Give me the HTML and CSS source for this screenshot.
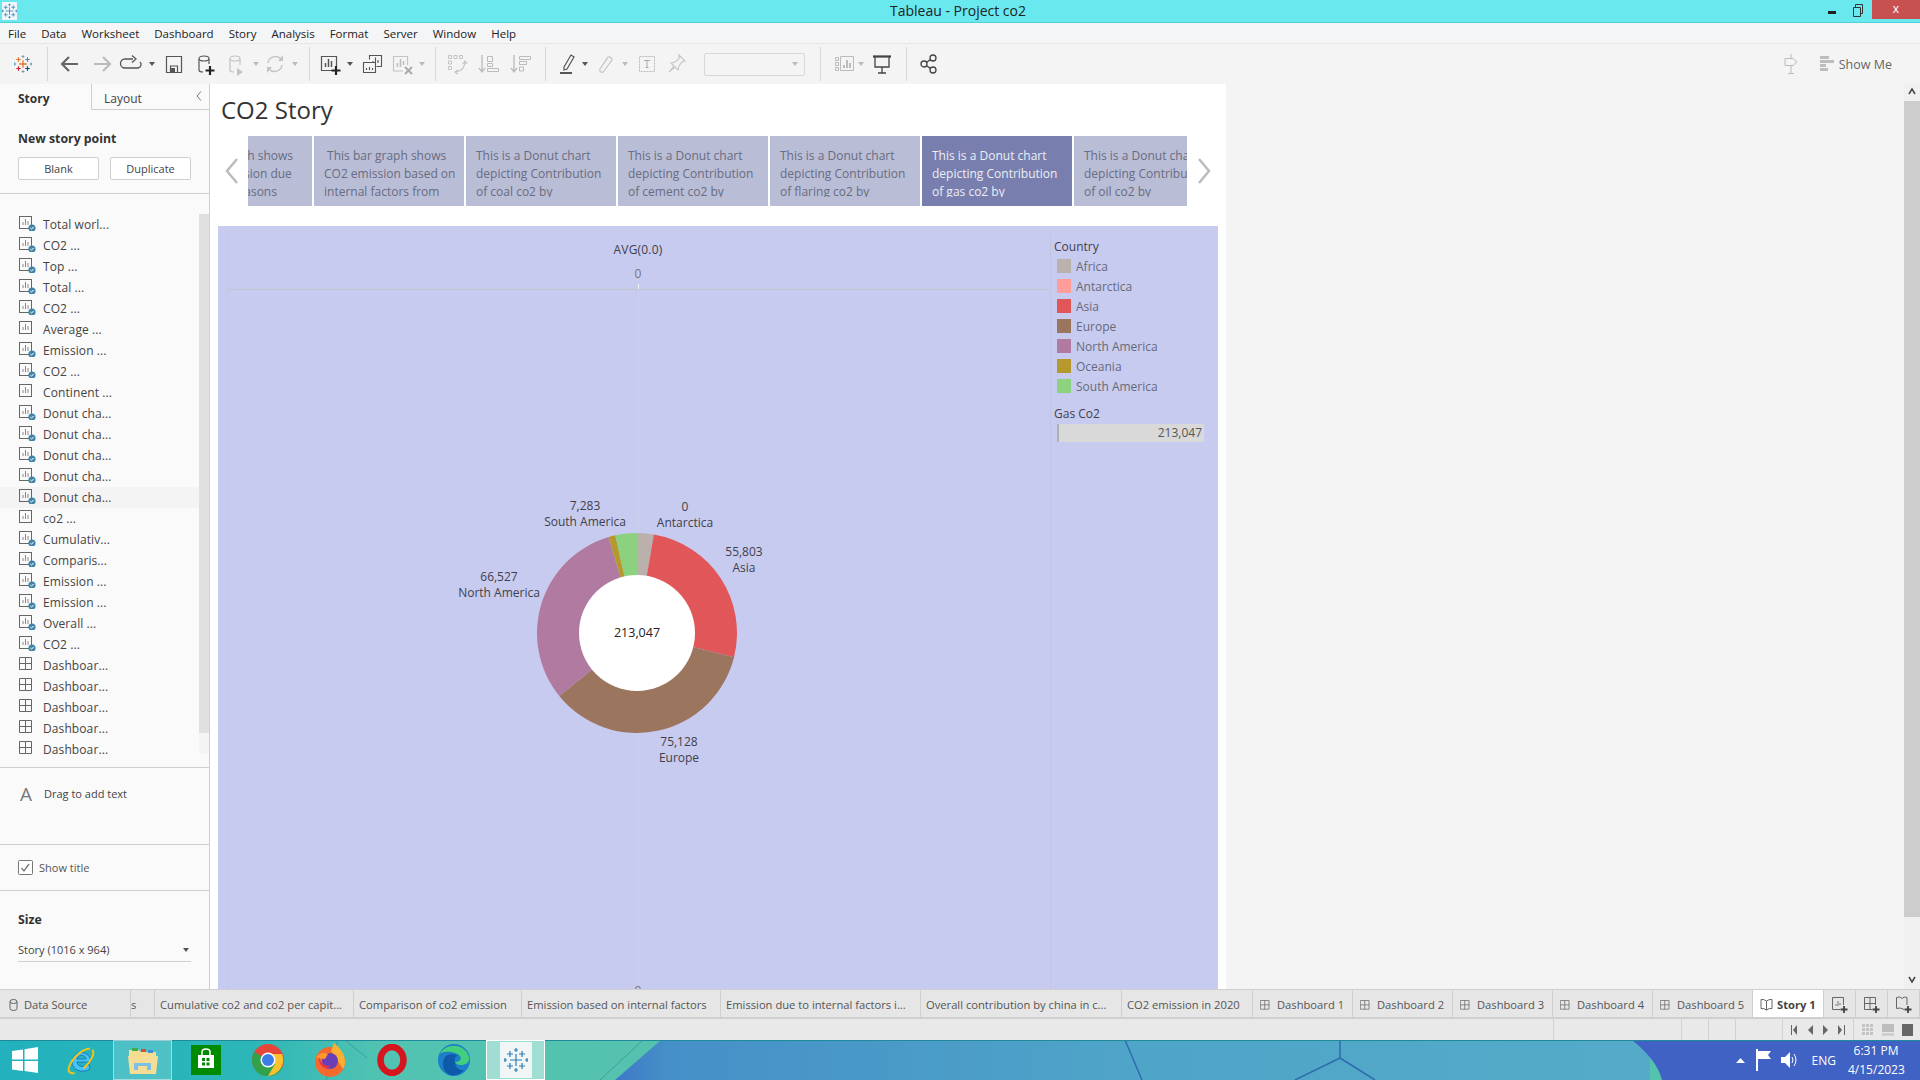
FILE: index.html
```html
<!DOCTYPE html>
<html lang="en">
<head>
    <meta charset="UTF-8">
    <title>Tableau - Project co2</title>
    <link rel="stylesheet" href="styles.css">
</head>
<body>
    <!-- shared icons -->
    <svg class="defs">
        <symbol id="ws" viewBox="0 0 18 18">
            <rect x="0.5" y="3.5" width="12" height="12" fill="none" stroke="#666"/>
            <path d="M4 12V9M6.5 12V6M9 12V8" stroke="#888" fill="none"/>
        </symbol>
        <symbol id="ws-ok" viewBox="0 0 18 18">
            <rect x="0.5" y="3.5" width="12" height="12" fill="none" stroke="#666"/>
            <path d="M4 12V9M6.5 12V6M9 12V8" stroke="#888" fill="none"/>
            <circle cx="13" cy="15" r="3.6" fill="#3f84a8"/>
            <path d="M11.3 15l1.2 1.2 2.2-2.3" stroke="#fff" fill="none"/>
        </symbol>
        <symbol id="db" viewBox="0 0 18 18">
            <path d="M0.5 3.5h12v12h-12zM6.5 3.5v12M0.5 9.5h12" fill="none" stroke="#666"/>
        </symbol>
        <symbol id="logo" viewBox="-4 -4 32 32">
            <path d="M12 7v10M7 12h10" stroke="#e8762d" stroke-width="1.8"/>
            <path d="M6 3v6M3 6h6" stroke="#e8762d" stroke-width="1.6"/>
            <path d="M18 3v6M15 6h6" stroke="#5b879b" stroke-width="1.6"/>
            <path d="M6 15v6M3 18h6" stroke="#c72037" stroke-width="1.6"/>
            <path d="M18 15v6M15 18h6" stroke="#1f447a" stroke-width="1.6"/>
            <path d="M1 10v4M0 12h3M23 10v4M21 12h3" stroke="#5b9bc4" stroke-width="1.3"/>
            <path d="M12 0v4M10 2h4M12 20v4M10 22h4" stroke="#7d9cb0" stroke-width="1.3"/>
        </symbol>
        <symbol id="logo-blue" viewBox="0 0 24 24">
            <path d="M12 6v12M6 12h12M6 3v6M3 6h6M18 3v6M15 6h6M6 15v6M3 18h6M18 15v6M15 18h6M1 10v4M0 12h3M23 10v4M21 12h3M12 0v4M10 2h4M12 20v4M10 22h4" stroke="#2f7fb5" stroke-width="1.2" fill="none"/>
        </symbol>
    </svg>

    <header class="titlebar">
        <svg class="title-logo" width="15" height="18"><use href="#logo-blue"/></svg>
        <div class="title-text">Tableau - Project co2</div>
        <div class="win-btns">
            <span class="win-min"></span>
            <svg class="win-restore" width="10" height="13" viewBox="0 0 10 13"><path d="M2.5 3.5V.5h7v9h-2M.5 3.5h7v9h-7z" fill="none" stroke="#333"/></svg>
            <span class="win-close">x</span>
        </div>
    </header>

    <nav class="menubar">
        <span>File</span><span>Data</span><span>Worksheet</span><span>Dashboard</span><span>Story</span><span>Analysis</span><span>Format</span><span>Server</span><span>Window</span><span>Help</span>
    </nav>

    <div class="toolbar">
        <svg class="ti" viewBox="0 0 24 24"><use href="#logo" width="24" height="24"/></svg>
        <i class="sep g12"></i>
        <svg class="ti g10" viewBox="0 0 24 24"><path d="M20 12H5M11 5l-7 7 7 7" fill="none" stroke="#666" stroke-width="2.2"/></svg>
        <svg class="ti g8" viewBox="0 0 24 24"><path d="M4 12h15M13 5l7 7-7 7" fill="none" stroke="#bbb" stroke-width="2.2"/></svg>
        <svg class="ti g5" viewBox="0 0 24 24"><path d="M14 7H6a3.500 3.500 0 0 0 0 9h13a3.500 3.500 0 0 0 2-6M13 3.500l4 3.500-4 3.500" fill="none" stroke="#555" stroke-width="1.300"/></svg>
        <i class="caret g5"></i>
        <svg class="ti g6" viewBox="0 0 24 24"><path d="M4.500 4.500h15v16h-15zM8.500 20v-6h7v6" fill="none" stroke="#555" stroke-width="1.200"/><rect x="9" y="16" width="4" height="4" fill="#555"/></svg>
        <svg class="ti g6" viewBox="0 0 24 24"><path d="M7 7v11q0 2 4 2M17 7v5" fill="none" stroke="#555" stroke-width="1.200"/><ellipse cx="12" cy="6.500" rx="5" ry="2.500" fill="none" stroke="#555" stroke-width="1.200"/><path d="M18 14v9M13.500 18.500h9" stroke="#222" stroke-width="2.200"/></svg>
        <svg class="ti g7" viewBox="0 0 24 24"><path d="M7 7v11q0 2 4 2M17 7v6" fill="none" stroke="#c4c4c4" stroke-width="1.200"/><ellipse cx="12" cy="6.500" rx="5" ry="2.500" fill="none" stroke="#c4c4c4" stroke-width="1.200"/><path d="M14 16l6 4-6 4z" fill="#c4c4c4"/></svg>
        <i class="caret off g5"></i>
        <svg class="ti g3" viewBox="0 0 24 24"><path d="M5 11a7.500 7.500 0 0 1 13-4M19 13a7.500 7.500 0 0 1-13 4" fill="none" stroke="#c4c4c4" stroke-width="1.500"/><path d="M20 3v6h-5zM4 21v-6h5z" fill="#c4c4c4"/></svg>
        <i class="caret off g4"></i>
        <i class="sep g10"></i>
        <svg class="ti g8" viewBox="0 0 24 24"><path d="M16 18.500H3.500v-14h15V14" fill="none" stroke="#555" stroke-width="1.200"/><path d="M7.500 15v-4M10.500 15V7M13.500 15V9" stroke="#555" stroke-width="1.500"/><path d="M18 14v9M13.500 18.500h9" stroke="#222" stroke-width="2.200"/></svg>
        <i class="caret g4"></i>
        <svg class="ti g6" viewBox="0 0 24 24"><path d="M9.500 7.500v-4h12v11h-5M3.500 10.500h12v10h-12z" fill="none" stroke="#555" stroke-width="1.100"/><path d="M13 10V9M15.500 10V5.500M18 11V8M6.500 18v-2M9.500 18v-3M12.500 18v-2" stroke="#555" stroke-width="1.100"/></svg>
        <svg class="ti g6" viewBox="0 0 24 24"><path d="M13 19H3.500V4.500h14V13" fill="none" stroke="#c4c4c4" stroke-width="1.200"/><path d="M7.500 15v-4M10.500 15V7M13.500 13V9" stroke="#bbb" stroke-width="1.500"/><path d="M15 15l7 7M22 15l-7 7" stroke="#aaa" stroke-width="2"/></svg>
        <i class="caret off g4"></i>
        <i class="sep g9"></i>
        <svg class="ti g9" viewBox="0 0 24 24"><path d="M3.500 3.500h3v3h-3zM9 3.500h3v3H9zM14.500 3.500h3v3h-3zM3.500 9h3v3h-3zM3.500 14.500h3v3h-3z" fill="none" stroke="#c4c4c4"/><path d="M20 9q0 9-9 11M18 12l2-3 2 3M13 18l-3 2 3 2" fill="none" stroke="#c4c4c4" stroke-width="1.200"/></svg>
        <svg class="ti g9" viewBox="0 0 24 24"><path d="M4 3v16M1 16l3 4 3-4" fill="none" stroke="#bbb" stroke-width="1.300"/><path d="M9.500 4.500h5v5h-5zM9.500 11.500h5v3h-5zM9.500 16.500h11v3h-11z" fill="none" stroke="#bbb"/></svg>
        <svg class="ti g8" viewBox="0 0 24 24"><path d="M4 3v16M1 16l3 4 3-4" fill="none" stroke="#bbb" stroke-width="1.300"/><path d="M9.500 4.500h11v3h-11zM9.500 9.500h7v3h-7zM9.500 15h4v4h-4z" fill="none" stroke="#bbb"/></svg>
        <i class="sep g11"></i>
        <svg class="ti g9" viewBox="0 0 24 24"><path d="M9 15l7-12 3 2-7 12-3 1z" fill="none" stroke="#555" stroke-width="1.200"/><rect x="5" y="20" width="12" height="2" fill="#555"/></svg>
        <i class="caret g2"></i>
        <svg class="ti g4" viewBox="0 0 24 24"><path d="M9 14l6-9a3 3 0 0 1 4 3l-8 11a2 2 0 0 1-4-2l7-10" fill="none" stroke="#c4c4c4" stroke-width="1.200"/></svg>
        <i class="caret off g4"></i>
        <svg class="ti g6" viewBox="0 0 24 24"><rect x="4.500" y="4.500" width="15" height="15" fill="none" stroke="#bbb" stroke-dasharray="2 1"/><path d="M9 8.500h6M12 8.500v7M10.500 15.500h3" fill="none" stroke="#aaa"/></svg>
        <svg class="ti g6" viewBox="0 0 24 24"><path d="M14 3l6 6-3 1-3 4-1 4-3-3-6 5 5-6-3-3 4-1 4-3z" fill="none" stroke="#c4c4c4" stroke-width="1.100"/></svg>
        <div class="combo g15"><i class="caret off"></i></div>
        <i class="sep g15"></i>
        <svg class="ti g12" viewBox="0 0 24 24"><path d="M2.500 5.500h3v3h-3zM2.500 10.500h3v3h-3zM2.500 15.500h3v3h-3zM7.500 4.500h13v14h-13z" fill="none" stroke="#bbb"/><path d="M11 16v-3M14 16V8M17 16v-5" stroke="#aaa" stroke-width="1.500"/></svg>
        <i class="caret off"></i>
        <svg class="ti g5" viewBox="0 0 24 24"><path d="M3 4.500h18M5 5v10h14V5M12 15v6M8 21h8" fill="none" stroke="#444" stroke-width="1.300"/><path d="M3 4.500h18" stroke="#444" stroke-width="2"/></svg>
        <i class="sep g12"></i>
        <svg class="ti g10" viewBox="0 0 24 24"><circle cx="7" cy="12" r="3" fill="none" stroke="#444" stroke-width="1.300"/><circle cx="16" cy="6" r="3" fill="none" stroke="#444" stroke-width="1.300"/><circle cx="16" cy="18" r="3" fill="none" stroke="#444" stroke-width="1.300"/><path d="M9.500 10.300l4-2.700M9.500 13.700l4 2.700" stroke="#444" stroke-width="1.300"/></svg>
        <div class="toolbar-right">
            <svg width="14" height="20" viewBox="0 0 14 20"><path d="M7 0v4M1 4.500h8l4 3.500-4 3.500H1zM7 12v7M4 19.500h6" fill="none" stroke="#bbb"/></svg>
            <svg class="showme-icon" width="14" height="16" viewBox="0 0 14 16"><path d="M0 0h9v3H0zM0 4h14v3H0zM0 8h6v3H0zM0 12h8v3H0z" fill="#bdbdbd"/></svg>
            <span>Show Me</span>
        </div>
    </div>

    <div class="workspace">
        <aside class="sidebar">
            <div class="side-tabs">
                <div class="side-tab active">Story</div>
                <div class="side-tab">Layout<svg class="collapse" width="6" height="10" viewBox="0 0 6 10"><path d="M5 .5L1 5l4 4.500" fill="none" stroke="#777"/></svg></div>
            </div>
            <div class="new-point">
                <h3>New story point</h3>
                <div class="new-btns">
                    <button>Blank</button>
                    <button>Duplicate</button>
                </div>
            </div>
            <div class="sheets">
                <ul class="sheet-list">
                    <li><svg><use href="#ws-ok"/></svg>Total worl...</li>
                    <li><svg><use href="#ws-ok"/></svg>CO2 ...</li>
                    <li><svg><use href="#ws-ok"/></svg>Top ...</li>
                    <li><svg><use href="#ws-ok"/></svg>Total ...</li>
                    <li><svg><use href="#ws-ok"/></svg>CO2 ...</li>
                    <li><svg><use href="#ws"/></svg>Average ...</li>
                    <li><svg><use href="#ws-ok"/></svg>Emission ...</li>
                    <li><svg><use href="#ws-ok"/></svg>CO2 ...</li>
                    <li><svg><use href="#ws"/></svg>Continent ...</li>
                    <li><svg><use href="#ws-ok"/></svg>Donut cha...</li>
                    <li><svg><use href="#ws-ok"/></svg>Donut cha...</li>
                    <li><svg><use href="#ws-ok"/></svg>Donut cha...</li>
                    <li><svg><use href="#ws-ok"/></svg>Donut cha...</li>
                    <li class="hover"><svg><use href="#ws-ok"/></svg>Donut cha...</li>
                    <li><svg><use href="#ws"/></svg>co2 ...</li>
                    <li><svg><use href="#ws-ok"/></svg>Cumulativ...</li>
                    <li><svg><use href="#ws-ok"/></svg>Comparis...</li>
                    <li><svg><use href="#ws-ok"/></svg>Emission ...</li>
                    <li><svg><use href="#ws-ok"/></svg>Emission ...</li>
                    <li><svg><use href="#ws-ok"/></svg>Overall ...</li>
                    <li><svg><use href="#ws-ok"/></svg>CO2 ...</li>
                    <li><svg><use href="#db"/></svg>Dashboar...</li>
                    <li><svg><use href="#db"/></svg>Dashboar...</li>
                    <li><svg><use href="#db"/></svg>Dashboar...</li>
                    <li><svg><use href="#db"/></svg>Dashboar...</li>
                    <li><svg><use href="#db"/></svg>Dashboar...</li>
                </ul>
                <div class="sheet-scroll"><div class="sheet-thumb"></div></div>
            </div>
            <div class="drag-text">
                <span class="big-a">A</span>
                <span>Drag to add text</span>
            </div>
            <div class="show-title">
                <svg width="15" height="15" viewBox="0 0 15 15"><rect x=".5" y=".5" width="14" height="14" rx="1" fill="#fff" stroke="#777"/><path d="M3.500 8l2.500 3 5-7" fill="none" stroke="#777" stroke-width="1.300"/></svg>
                <span>Show title</span>
            </div>
            <div class="size-box">
                <h3>Size</h3>
                <div class="size-select">Story (1016 x 964)<i class="caret"></i></div>
            </div>
        </aside>

        <main class="story">
            <h1 class="story-title">CO2 Story</h1>
            <div class="navigator">
                <svg class="flip" width="14" height="26" viewBox="0 0 14 26"><path d="M12 1L2 13l10 12" fill="none" stroke="#bcbcbc" stroke-width="2.500"/></svg>
                <div class="points">
                    <div class="point"><p>This bar graph shows<br>Its CO2 emission due<br>to various reasons</p></div>
                    <div class="point"><p>&nbsp;This bar graph shows<br>CO2 emission based on<br>internal factors from</p></div>
                    <div class="point"><p>This is a Donut chart<br>depicting Contribution<br>of coal co2 by</p></div>
                    <div class="point"><p>This is a Donut chart<br>depicting Contribution<br>of cement co2 by</p></div>
                    <div class="point"><p>This is a Donut chart<br>depicting Contribution<br>of flaring co2 by</p></div>
                    <div class="point current"><p>This is a Donut chart<br>depicting Contribution<br>of gas co2 by</p></div>
                    <div class="point"><p>This is a Donut chart<br>depicting Contribution<br>of oil co2 by</p></div>
                </div>
                <svg class="flip" width="14" height="26" viewBox="0 0 14 26"><path d="M2 1l10 12L2 25" fill="none" stroke="#bcbcbc" stroke-width="2.500"/></svg>
            </div>

            <div class="viz">
                <div class="line-h"></div>
                <div class="line-v left"></div>
                <div class="line-v right"></div>
                <div class="line-zero"></div>
                <div class="tick"></div>
                <div class="lbl axis-title">AVG(0.0)</div>
                <div class="lbl axis-zero">0</div>
                <div class="lbl axis-zero bottom">0</div>

                <svg class="donut" width="200" height="200" viewBox="0 0 200 200">
                    <path d="M100 100V0A100 100 0 0 1 116.850 1.430Z" fill="#bab0ac"/>
                    <path d="M100 100L116.850 1.430A100 100 0 0 1 197.030 124.190Z" fill="#e15759"/>
                    <path d="M100 100L197.030 124.190A100 100 0 0 1 22.290 162.930Z" fill="#9c755f"/>
                    <path d="M100 100L22.290 162.930A100 100 0 0 1 71.600 4.120Z" fill="#b07aa1"/>
                    <path d="M100 100L71.600 4.120A100 100 0 0 1 78.360 2.370Z" fill="#b6992d"/>
                    <path d="M100 100L78.360 2.370A100 100 0 0 1 100 0Z" fill="#8cd17d"/>
                    <circle cx="100" cy="100" r="58" fill="#fff"/>
                </svg>

                <div class="lbl l-sa">7,283<br>South America</div>
                <div class="lbl l-ant">0<br>Antarctica</div>
                <div class="lbl l-asia">55,803<br>Asia</div>
                <div class="lbl l-na">66,527<br>North America</div>
                <div class="lbl l-eu">75,128<br>Europe</div>
                <div class="lbl l-total">213,047</div>

                <div class="legend">
                    <h4>Country</h4>
                    <ul>
                        <li><i class="sw africa"></i>Africa</li>
                        <li><i class="sw antarctica"></i>Antarctica</li>
                        <li><i class="sw asia"></i>Asia</li>
                        <li><i class="sw europe"></i>Europe</li>
                        <li><i class="sw namerica"></i>North America</li>
                        <li><i class="sw oceania"></i>Oceania</li>
                        <li><i class="sw samerica"></i>South America</li>
                    </ul>
                    <h4 class="gas-title">Gas Co2</h4>
                    <div class="gas-bar">213,047</div>
                </div>
            </div>
        </main>

        <div class="blank-area"></div>

        <div class="vscroll">
            <svg width="16" height="16" viewBox="0 0 16 16"><path d="M5 10l3-5 3 5" fill="none" stroke="#444" stroke-width="1.500"/></svg>
            <div class="vthumb"></div>
            <svg class="vdown" width="16" height="10" viewBox="0 0 16 10"><path d="M5 1l3 5 3-5" fill="none" stroke="#444" stroke-width="1.500"/></svg>
        </div>
    </div>

    <div class="tabs">
        <div class="tab first"><svg width="9" height="12" viewBox="0 0 9 12"><path d="M1 2.500v7q0 2 3.500 2t3.500-2v-7M1 2.500q0-2 3.500-2t3.500 2-3.500 2-3.500-2" fill="none" stroke="#666"/></svg>Data Source</div>
        <div class="tab stub">s</div>
        <div class="tab">Cumulative co2 and co2 per capit...</div>
        <div class="tab">Comparison of co2 emission</div>
        <div class="tab">Emission based on internal factors</div>
        <div class="tab">Emission due to internal factors i...</div>
        <div class="tab">Overall contribution by china in c...</div>
        <div class="tab">CO2 emission in 2020</div>
        <div class="tab dash"><svg><use href="#db"/></svg>Dashboard 1</div>
        <div class="tab dash"><svg><use href="#db"/></svg>Dashboard 2</div>
        <div class="tab dash"><svg><use href="#db"/></svg>Dashboard 3</div>
        <div class="tab dash"><svg><use href="#db"/></svg>Dashboard 4</div>
        <div class="tab dash"><svg><use href="#db"/></svg>Dashboard 5</div>
        <div class="tab dash active"><svg width="13" height="13" viewBox="0 0 13 13"><path d="M6.500 3Q4 1 1 1.500v9q3-.5 5.500 1.500 2.500-2 5.500-1.500v-9Q9 1 6.500 3zv9" fill="none" stroke="#666"/></svg>Story 1</div>
        <div class="tab add"><svg width="18" height="18" viewBox="0 0 18 18"><path d="M9 13.500H1.500v-12h11V9" fill="none" stroke="#666"/><path d="M5 10V8M7 10V5M9 9V7" stroke="#777"/><path d="M13 10v7M9.500 13.500h7" stroke="#444" stroke-width="1.800"/></svg></div>
        <div class="tab add"><svg width="18" height="18" viewBox="0 0 18 18"><path d="M9 13.500H1.500v-12h11V9M1.500 7.500h11M7 1.500v12" fill="none" stroke="#666"/><path d="M13 10v7M9.500 13.500h7" stroke="#444" stroke-width="1.800"/></svg></div>
        <div class="tab add"><svg width="18" height="18" viewBox="0 0 18 18"><path d="M9 13.500Q5 11 1.500 12.500v-11Q5 0 7 2.500 9 0 12 1.500V9" fill="none" stroke="#666"/><path d="M13 10v7M9.500 13.500h7" stroke="#444" stroke-width="1.800"/></svg></div>
    </div>

    <div class="statusbar">
        <div class="cell"></div>
        <div class="cell"></div>
        <div class="cell"></div>
        <div class="cell"></div>
        <div class="cell"></div>
        <div class="cell pager">
            <svg width="7" height="10" viewBox="0 0 7 10"><path d="M6 0v10L2 5zM0 0h1v10H0z" fill="#666"/></svg>
            <svg width="5" height="10" viewBox="0 0 5 10"><path d="M5 0v10L0 5z" fill="#666"/></svg>
            <svg width="5" height="10" viewBox="0 0 5 10"><path d="M0 0v10l5-5z" fill="#666"/></svg>
            <svg width="7" height="10" viewBox="0 0 7 10"><path d="M0 0v10l4-5zM6 0h1v10H6z" fill="#666"/></svg>
        </div>
        <div class="cell views">
            <svg width="12" height="12" viewBox="0 0 12 12"><path d="M0 0h3v3H0zM4 0h3v3H4zM8 0h3v3H8zM0 4h3v3H0zM4 4h3v3H4zM8 4h3v3H8zM0 8h3v3H0zM4 8h3v3H4zM8 8h3v3H8z" fill="#c4c4c4"/></svg>
            <svg width="12" height="12" viewBox="0 0 12 12"><path d="M0 0h12v8H0z" fill="#bdbdbd"/><path d="M0 9h12v3H0z" fill="#d0d0d0"/></svg>
            <svg width="12" height="12" viewBox="0 0 12 12"><path d="M0 0h11v12H0z" fill="#666"/></svg>
        </div>
    </div>

    <footer class="taskbar">
        <svg class="wallpaper" width="1920" height="40" viewBox="0 0 1920 40">
            <defs>
                <linearGradient id="wp" x1="0" x2="1" y1="0" y2="0">
                    <stop offset="0" stop-color="#22b1bd"/>
                    <stop offset=".13" stop-color="#2cb6b8"/>
                    <stop offset=".2" stop-color="#52c3b2"/>
                    <stop offset=".36" stop-color="#55c2ae"/>
                </linearGradient>
                <linearGradient id="wp-blue" x1="0" x2="1" y1="0" y2="0">
                    <stop offset="0" stop-color="#3f78c8"/>
                    <stop offset=".05" stop-color="#4590c8"/>
                    <stop offset=".5" stop-color="#4fa5c8"/>
                    <stop offset="1" stop-color="#54aac8"/>
                </linearGradient>
            </defs>
            <rect width="1920" height="40" fill="url(#wp)"/>
            <path d="M615 40L661 0H1650V40Z" fill="url(#wp-blue)"/>
            <path d="M1632 0q25 20 30 40H1920V0Z" fill="#3f62c4"/>
            <path d="M338 0l-12 40M345 0l22 18M643 0L600 40" stroke="#3f9e9a" fill="none"/>
            <path d="M1125 0l17 40M1340 0v18M1340 18l-45 22M1340 18l35 22" stroke="#2f6cae" fill="none" stroke-width="1.500"/>
            <rect width="1920" height="1" fill="#1e8a9a"/>
        </svg>
        <svg class="task-win" width="26" height="26" viewBox="0 0 26 26"><path d="M0 4l11-1.500v10H0zM12.500 2.200L26 0v12.500H12.500zM0 14h11v10L0 22.500zM12.500 14H26v12l-13.500-2z" fill="#fff"/></svg>
        <div class="task-item"><svg width="32" height="32" viewBox="0 0 32 32"><path d="M7 18a9.500 9.500 0 1 1 19 0H12c.5 5 8 6 12 2l1 5c-8 5-18 1-18-7zM12 15h9c-.5-5-8-5-9 0z" fill="#45c4f5" fill-rule="evenodd" stroke="#1569b8" stroke-width=".8"/><ellipse cx="16" cy="17" rx="16" ry="7" transform="rotate(-45 16 17)" fill="none" stroke="#f0c419" stroke-width="2" stroke-dasharray="22 10 40 30"/></svg></div>
        <div class="task-item open"><svg width="32" height="32" viewBox="0 0 32 32"><path d="M2 6h10l2 2h15v5H2z" fill="#f4dc90"/><path d="M5 4h6v3H5z" fill="#3fae49"/><path d="M14 5h5v3h-5z" fill="#d24f3f"/><path d="M21 6h5v3h-5z" fill="#3f8fd8"/><path d="M1 12h30l-2 18H3z" fill="#f6dd95"/><path d="M7 26V19h17v7h-4v-4h-9v4z" fill="#7cc0e8"/></svg></div>
        <div class="task-item"><svg width="30" height="30" viewBox="0 0 30 30"><rect width="30" height="30" fill="#008a00"/><path d="M7 10h16v13H7z" fill="#fff"/><path d="M11 10V7q0-3 4-3t4 3v3" fill="none" stroke="#fff" stroke-width="1.500"/><path d="M11 13h3v3h-3zM15.500 13h3v3h-3zM11 17.500h3v3h-3zM15.500 17.500h3v3h-3z" fill="#008a00"/></svg></div>
        <div class="task-item"><svg width="32" height="32" viewBox="0 0 32 32"><circle cx="16" cy="16" r="16" fill="#e6463a"/><path d="M16 16L2 24a16 16 0 0 1 .5-16z" fill="#31a24c"/><path d="M16 16l14 8A16 16 0 0 1 2 24l7-4z" fill="#31a24c"/><path d="M16 10h14a16 16 0 0 1-14 22l7-12z" fill="#f7c22e"/><circle cx="16" cy="16" r="7.500" fill="#fff"/><circle cx="16" cy="16" r="6" fill="#3b7de8"/></svg></div>
        <div class="task-item"><svg width="32" height="34" viewBox="0 0 32 34"><circle cx="16" cy="19" r="15" fill="#f56a2c"/><path d="M20 0c6 5 11 11 11 19 0 3-1 5-2 7L17 8z" fill="#fbb034"/><circle cx="16" cy="18" r="8" fill="#6a3fb5"/><path d="M2 14q6-6 12-3l-3 5q-5 0-9-2z" fill="#fc9a2d"/><path d="M13 26c-6-2-9-7-8-12 1 6 6 9 11 9z" fill="#e3344f"/></svg></div>
        <div class="task-item"><svg width="30" height="32" viewBox="0 0 30 32"><ellipse cx="15" cy="16" rx="11.500" ry="13" fill="none" stroke="#d5161f" stroke-width="6.500"/></svg></div>
        <div class="task-item"><svg width="32" height="32" viewBox="0 0 32 32"><circle cx="16" cy="16" r="16" fill="#1b7fcb"/><path d="M2 10C6 0 26-3 31 13c1 5-3 8-8 8-3 0-5-1-6-3 5 0 7-3 5-6C19 8 6 6 2 10z" fill="#44cf7e"/><path d="M17 18c0 5 4 9 9 8-4 5-11 7-16 4C4 26 4 18 7 13c2-3 9-4 13-1-3 0-4 3-3 6z" fill="#0e5aa8"/></svg></div>
        <div class="task-item tableau"><svg width="32" height="36" viewBox="-4 -6 32 36"><rect x="-4" y="-6" width="32" height="36" fill="#f0f5f6"/><use href="#logo-blue" width="24" height="24"/></svg></div>
        <div class="tray">
            <svg width="9" height="5" viewBox="0 0 9 5"><path d="M0 5l4.500-5L9 5z" fill="#fff"/></svg>
            <svg class="tray-flag" width="16" height="24" viewBox="0 0 16 24"><path d="M1 1v22" stroke="#fff" stroke-width="2"/><path d="M2 3h13l-3 4 3 4H2z" fill="#fff"/></svg>
            <svg class="tray-sound" width="16" height="20" viewBox="0 0 16 20"><path d="M0 7h4l5-5v16l-5-5H0z" fill="#fff"/><path d="M11 7q2 3 0 6M13 4q4 6 0 12" fill="none" stroke="#fff"/></svg>
            <span class="tray-lang">ENG</span>
            <div class="clock">6:31 PM<br>4/15/2023</div>
        </div>
    </footer>
</body>
</html>
```

FILE: styles.css
```css
* {
    margin: 0;
    padding: 0;
    box-sizing: border-box;
}

html, body {
    width: 1920px;
    height: 1080px;
    overflow: hidden;
}

body {
    display: flex;
    flex-direction: column;
    font-family: 'Open Sans', 'Noto Sans', sans-serif;
    font-size: 12px;
    color: #333;
    background-color: #f4f4f4;
}

ul {
    list-style: none;
}

i {
    display: block;
    font-style: normal;
}

.defs {
    display: none;
}

/* title bar */
.titlebar {
    height: 23px;
    flex: none;
    display: flex;
    align-items: flex-start;
    background-color: #69e8ee;
    border-bottom: 1px solid #4fd0d6;
}

.title-logo {
    margin: 2px 0 0 2px;
    background-color: #eef6fa;
}

.title-text {
    flex: 1;
    text-align: center;
    font-size: 14px;
    line-height: 22px;
    padding-left: 71px;
    color: #222;
}

.win-btns {
    display: flex;
    align-items: flex-start;
}

.win-min {
    width: 8px;
    height: 3px;
    margin: 11px 17px 0 0;
    background-color: #222;
}

.win-restore {
    margin: 4px 9px 0 0;
}

.win-close {
    width: 48px;
    height: 19px;
    background-color: #c75050;
    color: #fff;
    text-align: center;
    font-size: 12px;
    line-height: 17px;
}

/* menu */
.menubar {
    height: 21px;
    flex: none;
    display: flex;
    align-items: center;
    gap: 15px;
    padding-left: 8px;
    font-size: 11.5px;
    background-color: #f4f5f7;
    border-bottom: 1px solid #e6e6e6;
    color: #222;
}

/* toolbar */
.toolbar {
    height: 40px;
    flex: none;
    display: flex;
    align-items: center;
    padding-left: 11px;
    background-color: #f4f4f4;
}

.ti {
    width: 24px;
    height: 24px;
    flex: none;
}

.sep {
    width: 1px;
    height: 34px;
    flex: none;
    background-color: #d8d8d8;
}

/* 8px wide box, 6px triangle */
.caret {
    width: 0;
    height: 0;
    flex: none;
    margin: 0 1px;
    border: 3px solid transparent;
    border-top: 4px solid #555;
    border-bottom: 0;
}

.caret.off {
    border-top-color: #bbb;
}

.g2 { margin-left: 3px; }
.g3 { margin-left: 3px; }
.g4 { margin-left: 5px; }
.g5 { margin-left: 6px; }
svg.g4 { margin-left: 4px; }
svg.g5 { margin-left: 5px; }
.g6 { margin-left: 6px; }
.g7 { margin-left: 7px; }
.g8 { margin-left: 8px; }
.g9 { margin-left: 9px; }
.g10 { margin-left: 10px; }
.g11 { margin-left: 11px; }
.g12 { margin-left: 12px; }
.g15 { margin-left: 15px; }

.combo {
    width: 101px;
    height: 23px;
    flex: none;
    display: flex;
    align-items: center;
    justify-content: flex-end;
    padding-right: 5px;
    border: 1px solid #d8d8d8;
    border-radius: 2px;
}

.toolbar-right {
    margin-left: auto;
    padding-right: 28px;
    display: flex;
    align-items: center;
    font-size: 12.5px;
    color: #666;
}

.showme-icon {
    margin: 0 5px 0 22px;
}

/* main area */
.workspace {
    height: 905px;
    flex: none;
    display: flex;
}

.sidebar {
    width: 210px;
    flex: none;
    display: flex;
    flex-direction: column;
    background-color: #fafafa;
    border-right: 1px solid #cfcfcf;
}

.side-tabs {
    height: 26px;
    display: flex;
    line-height: 29px;
}

.side-tab {
    flex: 1;
    position: relative;
    padding-left: 12px;
    background-color: #fafafa;
    border-left: 1px solid #cfcfcf;
    border-bottom: 1px solid #cfcfcf;
    color: #444;
}

.side-tab.active {
    flex: none;
    width: 91px;
    padding-left: 18px;
    border: none;
    font-weight: 700;
    color: #333;
}

.collapse {
    position: absolute;
    right: 7px;
    top: 7px;
}

.new-point {
    height: 84px;
    padding: 20px 18px 0;
    border-bottom: 1px solid #cfcfcf;
}

.new-point h3, .size-box h3 {
    font-size: 12.3px;
    font-weight: 700;
    line-height: 18px;
}

.new-btns {
    display: flex;
    justify-content: space-between;
    margin-top: 9px;
}

.new-btns button {
    width: 81px;
    height: 23px;
    font-family: inherit;
    font-size: 11px;
    color: #444;
    background-color: #fff;
    border: 1px solid #cfcfcf;
    border-radius: 2px;
}

.sheets {
    height: 540px;
    margin-top: 20px;
    display: flex;
    overflow: hidden;
}

.sheet-list {
    flex: 1;
}

.sheet-list li {
    height: 21px;
    display: flex;
    align-items: center;
    gap: 6px;
    padding-left: 19px;
    letter-spacing: 0.1px;
    color: #444;
}

.sheet-list li.hover {
    background-color: #f4f4f4;
}

.sheet-list svg {
    width: 18px;
    height: 18px;
    margin-top: -5px;
}

.sheet-scroll {
    width: 10px;
    height: 540px;
    background-color: #f4f4f4;
}

.sheet-thumb {
    height: 519px;
    background-color: #e0e0e0;
}

.drag-text {
    height: 77px;
    margin-top: 13px;
    padding: 14px 0 0 20px;
    display: flex;
    align-items: flex-start;
    gap: 12px;
    line-height: 24px;
    font-size: 11px;
    color: #444;
    border-top: 1px solid #cfcfcf;
}

.big-a {
    font-size: 19px;
    color: #777;
}

.show-title {
    height: 46px;
    padding-left: 18px;
    display: flex;
    align-items: center;
    gap: 6px;
    font-size: 11px;
    color: #555;
    border-top: 1px solid #cfcfcf;
}

.size-box {
    flex: 1;
    padding: 20px 18px 0;
    border-top: 1px solid #cfcfcf;
}

.size-select {
    width: 173px;
    height: 24px;
    margin-top: 9px;
    display: flex;
    align-items: center;
    justify-content: space-between;
    padding-right: 1px;
    font-size: 11px;
    color: #444;
    border-bottom: 1px solid #cfcfcf;
}

/* story */
.story {
    width: 1016px;
    flex: none;
    display: flex;
    flex-direction: column;
    background-color: #fff;
    overflow: hidden;
}

.story-title {
    height: 52px;
    padding-left: 11px;
    font-size: 24px;
    font-weight: 400;
    line-height: 52px;
    color: #333;
}

.navigator {
    height: 70px;
    flex: none;
    display: flex;
    align-items: center;
    justify-content: space-between;
    padding: 0 15px;
}

.points {
    width: 939px;
    height: 70px;
    display: flex;
    justify-content: flex-start;
    gap: 2px;
    overflow: hidden;
    margin-left: 9px;
    margin-right: 10px;
}

.point {
    width: 150px;
    height: 70px;
    flex: none;
    padding: 11px 0 0 10px;
    background-color: #b9bdd6;
    color: #686c80;
}

.point:first-child {
    margin-left: -86px;
    padding-left: 12px;
}

.point:last-child {
    width: 113px;
}

.point p {
    height: 50px;
    line-height: 18px;
    white-space: nowrap;
    overflow: hidden;
}

.point.current {
    background-color: #787fae;
    color: #eceef6;
}

.viz {
    position: relative;
    width: 1000px;
    height: 763px;
    margin: 20px 0 0 8px;
    background-color: #c8cbf0;
    overflow: hidden;
}

.line-h {
    position: absolute;
    left: 9px;
    top: 63px;
    width: 823px;
    height: 1px;
    background-color: #c4c4cc;
}

.line-v {
    position: absolute;
    top: 8px;
    bottom: 0;
    width: 1px;
    background-color: #c3c5e2;
}

.line-v.left {
    left: 9px;
}

.line-v.right {
    left: 832px;
}

.line-zero {
    position: absolute;
    left: 420px;
    top: 64px;
    bottom: 0;
    border-left: 1px dotted #d0d2f0;
}

.tick {
    position: absolute;
    left: 420px;
    top: 58px;
    width: 1px;
    height: 5px;
    background-color: #f2f2f6;
}

.lbl {
    position: absolute;
    width: 120px;
    text-align: center;
    line-height: 16px;
    color: #3f3f4a;
}

.axis-title { left: 360px; top: 16px; letter-spacing: 0.2px; }
.axis-zero { left: 360px; top: 40px; color: #777; }
.axis-zero.bottom { top: 757px; }
.l-sa { left: 307px; top: 272px; }
.l-ant { left: 407px; top: 273px; }
.l-asia { left: 466px; top: 318px; }
.l-na { left: 221px; top: 343px; }
.l-eu { left: 401px; top: 508px; }
.l-total { left: 359px; top: 399px; font-size: 12.5px; color: #222; }

.donut {
    position: absolute;
    left: 319px;
    top: 307px;
}

.legend {
    position: absolute;
    left: 836px;
    top: 13px;
    width: 150px;
    color: #666a78;
}

.legend h4 {
    font-size: 12px;
    font-weight: 400;
    line-height: 16px;
    color: #3f3f4a;
}

.legend ul {
    margin-top: 1px;
}

.legend li {
    height: 20px;
    display: flex;
    align-items: center;
    gap: 5px;
    padding-left: 3px;
}

.sw {
    width: 14px;
    height: 14px;
}

.africa { background-color: #bab0ac; }
.antarctica { background-color: #ff9d9a; }
.asia { background-color: #e15759; }
.europe { background-color: #9c755f; }
.namerica { background-color: #b07aa1; }
.oceania { background-color: #b6992d; }
.samerica { background-color: #8cd17d; }

.legend .gas-title {
    margin-top: 10px;
}

.gas-bar {
    width: 147px;
    height: 18px;
    margin: 2px 0 0 3px;
    padding-right: 2px;
    text-align: right;
    line-height: 18px;
    background-color: #d9d9d9;
    border-left: 2px solid #b0b0b0;
    color: #555;
}

.blank-area {
    flex: 1;
}

.vscroll {
    width: 16px;
    flex: none;
    display: flex;
    flex-direction: column;
    background-color: #f0f0f0;
}

.vthumb {
    height: 816px;
    margin-top: 1px;
    background-color: #cdcdcd;
}

.vdown {
    margin-top: auto;
    margin-bottom: 3px;
}

/* sheet tabs */
.tabs {
    height: 30px;
    flex: none;
    display: grid;
    grid-template-columns: 131px 24px 199px 168px 199px 200px 201px 131px 100px 100px 100px 100px 100px 71px 32px 32px 32px;
    font-size: 11.2px;
    background-color: #e6e6e6;
    border-top: 1px solid #cfcfcf;
    border-bottom: 2px solid #cfcfcf;
}

.tab {
    display: flex;
    align-items: center;
    gap: 4px;
    padding-top: 2px;
    padding-left: 5px;
    white-space: nowrap;
    overflow: hidden;
    color: #555;
    border-right: 1px solid #cfcfcf;
}

.tab.first {
    padding-left: 9px;
    gap: 6px;
}

.tab.stub {
    padding-left: 0;
}

.tab.dash {
    padding-left: 7px;
}

.tab.dash svg {
    width: 13px;
    height: 13px;
    flex: none;
}

.tab.active {
    background-color: #fff;
    font-weight: 700;
    color: #444;
}

.tab.add {
    padding-left: 7px;
}

/* status bar */
.statusbar {
    height: 21px;
    flex: none;
    display: grid;
    grid-template-columns: 1553px 128px 27px 27px 47px 71px 67px;
    background-color: #e9e9e9;
}

.cell {
    border-left: 1px solid #d2d2d2;
}

.cell:first-child {
    border-left: none;
}

.pager {
    display: flex;
    align-items: center;
    gap: 10px;
    padding-left: 8px;
}

.views {
    display: flex;
    align-items: center;
    gap: 8px;
    padding-left: 8px;
}

/* taskbar */
.taskbar {
    position: relative;
    height: 40px;
    flex: none;
    display: flex;
    align-items: center;
    color: #fff;
    overflow: hidden;
}

.wallpaper {
    position: absolute;
    left: 0;
    top: 0;
}

.task-win {
    position: relative;
    margin: 0 12px 0 12px;
}

.task-item {
    position: relative;
    width: 62px;
    height: 40px;
    flex: none;
    display: flex;
    align-items: center;
    justify-content: center;
}

.task-item.open {
    background-color: rgba(255, 255, 255, 0.18);
    border: 1px solid rgba(255, 255, 255, 0.45);
    width: 59px;
    margin: 0 3px 0 1px;
}

.task-item.tableau {
    width: 59px;
    margin-left: 1px;
    background-color: rgba(255, 255, 255, 0.45);
    border: 1px solid #fff;
}

.tray {
    position: relative;
    margin-left: auto;
    display: flex;
    align-items: center;
    padding-right: 16px;
}

.tray-flag {
    margin-left: 11px;
}

.tray-sound {
    margin-left: 9px;
}

.tray-lang {
    margin: 0 12px 0 15px;
}

.clock {
    text-align: center;
    line-height: 19px;
    width: 56px;
}
```
